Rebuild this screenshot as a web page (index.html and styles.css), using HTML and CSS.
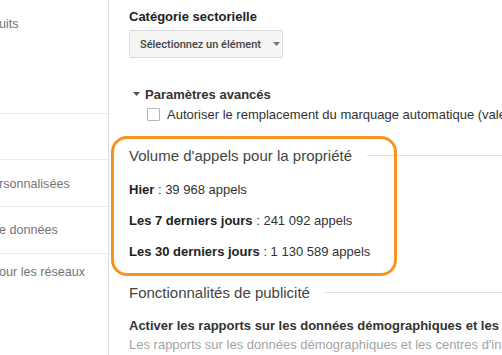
FILE: index.html
```
<!DOCTYPE html>
<html lang="fr">
<head>
<meta charset="utf-8">
<link rel="stylesheet" href="styles.css">
</head>
<body>
<div class="page">
  <nav class="sidebar">
    <div class="nav-item nav-first"><span class="clip">uits</span></div>
    <div class="nav-item"></div>
    <div class="nav-item"><span class="clip">rsonnalisées</span></div>
    <div class="nav-item"><span class="clip">e données</span></div>
    <div class="nav-item nav-last"><span class="clip">our les réseaux</span></div>
  </nav>
  <main class="content">
    <div class="field-label">Catégorie sectorielle</div>
    <button class="select" type="button">Sélectionnez un élément
      <svg class="select-arrow" width="7" height="4" viewBox="0 0 7 4"><path d="M0 0h7L3.5 4z" fill="#777"/></svg>
    </button>
    <div class="advanced">
      <svg class="toggle" width="7" height="4" viewBox="0 0 7 4"><path d="M0 0h7L3.5 4z" fill="#555"/></svg>
      <span>Paramètres avancés</span>
    </div>
    <label class="check-row"><span class="checkbox"></span><span>Autoriser le remplacement du marquage automatique (vale</span></label>

    <div class="section-head section-volume"><span>Volume d'appels pour la propriété</span><span class="rule"></span></div>
    <div class="stat stat-first"><b>Hier</b> : 39 968 appels</div>
    <div class="stat"><b>Les 7 derniers jours</b> : 241 092 appels</div>
    <div class="stat"><b>Les 30 derniers jours</b> : 1 130 589 appels</div>

    <div class="section-head section-ads"><span>Fonctionnalités de publicité</span><span class="rule"></span></div>
    <div class="opt-title">Activer les rapports sur les données démographiques et les</div>
    <div class="opt-desc">Les rapports sur les données démographiques et les centres d'in</div>
  </main>
  <div class="highlight"></div>
</div>
</body>
</html>
```
FILE: styles.css
```
html, body {
  margin: 0;
  padding: 0;
  background: #fff;
  overflow: hidden;
}
body {
  font-family: "Liberation Sans", Arial, sans-serif;
  color: #333;
  width: 502px;
  height: 355px;
}
.page {
  position: relative;
  display: flex;
  height: 355px;
  overflow: hidden;
}
.sidebar {
  width: 108px;
  flex: none;
  border-right: 1px solid #dcdcdc;
  overflow: hidden;
  font-size: 12.6px;
  color: #757575;
}
.nav-item {
  height: 46px;
  border-top: 1px solid #ebebeb;
  box-sizing: border-box;
  padding-top: 16px;
  white-space: nowrap;
}
.nav-first {
  height: 113px;
  border-top: none;
  padding-top: 16px;
}
.nav-item:nth-child(2) { height: 46px; }
.nav-item:nth-child(3) { height: 47px; }
.nav-item:nth-child(4) { height: 47px; padding-top: 15px; }
.nav-last { height: 60px; padding-top: 10px; }
.clip {
  display: block;
  margin-left: -1px;
  line-height: 16px;
}
.content {
  flex: 1;
  min-width: 0;
  padding: 9px 0 0 20px;
  white-space: nowrap;
  overflow: hidden;
}
.field-label {
  font-weight: 700;
  font-size: 13px;
  line-height: 16px;
  color: #222;
}
.select {
  display: flex;
  align-items: center;
  margin-top: 5px;
  width: 154px;
  height: 28px;
  box-sizing: border-box;
  padding: 0 0 0 10px;
  background: #f5f5f5;
  border: 1px solid #dcdcdc;
  border-radius: 2px;
  font-family: Roboto, "Liberation Sans", sans-serif;
  font-weight: 500;
  font-size: 11px;
  color: #444;
}
.select-arrow {
  margin-left: 12px;
}
.advanced {
  display: flex;
  align-items: center;
  margin-top: 28px;
  height: 16px;
  font-weight: 700;
  font-size: 13px;
  color: #333;
}
.toggle {
  margin: 0 5px 0 4px;
}
.check-row {
  display: flex;
  align-items: center;
  margin-top: 4px;
  height: 16px;
  padding-left: 18px;
  font-size: 13px;
  color: #333;
}
.checkbox {
  width: 11px;
  height: 11px;
  border: 1px solid #b5b5b5;
  border-radius: 1px;
  margin-right: 7px;
  flex: none;
}
.section-head {
  display: flex;
  align-items: center;
  height: 18px;
  font-size: 15px;
  color: #444;
}
.section-head .rule {
  flex: 1;
  height: 1px;
  background: #e0e0e0;
  margin-left: 15px;
}
.section-volume { margin-top: 24px; }
.stat {
  font-size: 13px;
  line-height: 16px;
  color: #333;
  margin-top: 15px;
}
.stat b { color: #222; }
.stat-first { margin-top: 18px; }
.section-ads { margin-top: 23px; }
.opt-title {
  margin-top: 17px;
  font-size: 13px;
  font-weight: 700;
  line-height: 16px;
  color: #333;
}
.opt-desc {
  margin-top: 3px;
  font-size: 13px;
  line-height: 16px;
  color: #a3a3a3;
}
.highlight {
  position: absolute;
  left: 111px;
  top: 136px;
  width: 286px;
  height: 140px;
  box-sizing: border-box;
  border: 3px solid #f7931e;
  border-radius: 16px;
  pointer-events: none;
}
```
